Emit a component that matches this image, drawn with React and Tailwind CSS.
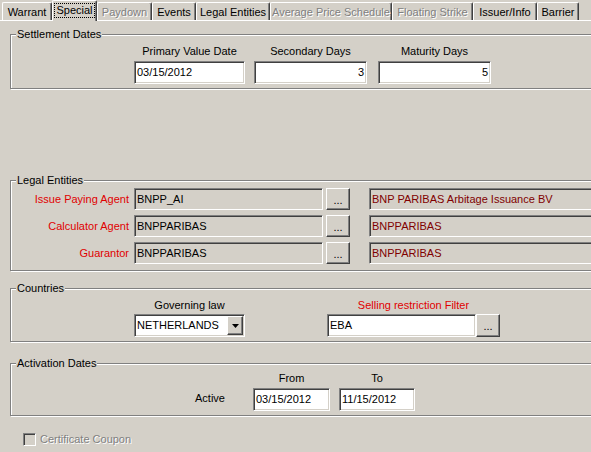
import React from "react";

const TABS = [
  { label: "Warrant", w: 50 },
  { label: "Special", w: 45, active: true },
  { label: "Paydown", w: 55, disabled: true },
  { label: "Events", w: 44 },
  { label: "Legal Entities", w: 74 },
  { label: "Average Price Schedule", w: 122, disabled: true },
  { label: "Floating Strike", w: 81, disabled: true },
  { label: "Issuer/Info", w: 64 },
  { label: "Barrier", w: 42 },
];

const sunken =
  "border border-t-[#808080] border-l-[#808080] border-b-white border-r-white shadow-[inset_1px_1px_0_#404040,inset_-1px_-1px_0_#d4d0c8]";
const raised =
  "border border-t-white border-l-white border-b-[#404040] border-r-[#404040] shadow-[inset_-1px_-1px_0_#808080]";
const disabledText = "text-[#808080] [text-shadow:1px_1px_0_#ffffff]";

function Tab({ label, w, active, disabled }) {
  return (
    <div
      style={{ width: w }}
      className={`flex items-center justify-center border-t border-l border-t-white border-l-white border-r border-r-[#404040] shadow-[inset_-1px_0_0_#808080] rounded-t-[2px] ${
        active ? "h-[21px] relative z-10 bg-[#d4d0c8]" : "h-[19px]"
      }`}
    >
      <span
        className={`leading-[13px] whitespace-nowrap ${disabled ? disabledText : "text-black"} ${
          active ? "border border-dotted border-black px-[1px] -mt-[2px]" : ""
        }`}
      >
        {label}
      </span>
    </div>
  );
}

function Group({ title, className, children }) {
  return (
    <div
      className={`relative ml-[10px] w-[600px] border border-[#808080] shadow-[inset_1px_1px_0_#ffffff,1px_1px_0_#ffffff] ${className}`}
    >
      <span className="absolute left-[5px] -top-[7px] px-[1px] bg-[#d4d0c8] leading-[13px] text-black">
        {title}
      </span>
      {children}
    </div>
  );
}

function Field({ value, right, gray, red, className }) {
  return (
    <div
      className={`${sunken} flex items-center px-[2px] overflow-hidden whitespace-nowrap ${
        gray ? "bg-[#d4d0c8]" : "bg-white"
      } ${right ? "justify-end" : ""} ${red ? "text-[#800000]" : "text-black"} ${className}`}
    >
      {value}
    </div>
  );
}

function DotsButton({ className }) {
  return (
    <div
      className={`${raised} bg-[#d4d0c8] flex items-center justify-center text-black leading-none pt-[2px] ${className}`}
    >
      ...
    </div>
  );
}

export default function App() {
  return (
    <div className="w-[591px] h-[452px] overflow-hidden bg-[#d4d0c8] font-['Liberation_Sans',Arial,sans-serif] text-[11px] text-black select-none">
      {/* tab strip */}
      <div className="relative flex items-end pl-[2px] h-[21px]">
        <div className="absolute left-0 right-0 bottom-0 h-px bg-white" />
        {TABS.map((t) => (
          <Tab key={t.label} {...t} />
        ))}
      </div>

      {/* Settlement Dates */}
      <Group title="Settlement Dates" className="mt-[13px] h-[55px]">
        <div className="flex pl-[123px] pt-[9px]">
          <div className="w-[111px] flex flex-col">
            <div className="text-center leading-[14px]">Primary Value Date</div>
            <Field value="03/15/2012" className="mt-[3px] h-[23px]" />
          </div>
          <div className="w-[113px] ml-[9px] flex flex-col">
            <div className="text-center leading-[14px]">Secondary Days</div>
            <Field value="3" right className="mt-[3px] h-[23px]" />
          </div>
          <div className="w-[113px] ml-[11px] flex flex-col">
            <div className="text-center leading-[14px]">Maturity Days</div>
            <Field value="5" right className="mt-[3px] h-[23px]" />
          </div>
        </div>
      </Group>

      {/* Legal Entities */}
      <Group title="Legal Entities" className="mt-[91px] h-[91px]">
        <div className="flex flex-col gap-[5px] pt-[7px]">
          {[
            ["Issue Paying Agent", "BNPP_AI", "BNP PARIBAS Arbitage Issuance BV"],
            ["Calculator Agent", "BNPPARIBAS", "BNPPARIBAS"],
            ["Guarantor", "BNPPARIBAS", "BNPPARIBAS"],
          ].map(([label, code, name]) => (
            <div key={label} className="flex items-center h-[22px]">
              <div className="w-[118px] text-right text-[#e00000] whitespace-nowrap">{label}</div>
              <Field value={code} gray className="ml-[5px] w-[189px] h-[22px]" />
              <DotsButton className="ml-[3px] w-[24px] h-[22px]" />
              <Field value={name} gray red className="ml-[19px] w-[240px] h-[22px]" />
            </div>
          ))}
        </div>
      </Group>

      {/* Countries */}
      <Group title="Countries" className="mt-[17px] h-[54px]">
        <div className="flex pl-[123px] pt-[9px]">
          <div className="w-[111px] flex flex-col">
            <div className="text-center leading-[14px]">Governing law</div>
            <div className={`${sunken} bg-white mt-[2px] h-[23px] flex items-center pl-[2px] pr-[1px]`}>
              <span className="flex-1">NETHERLANDS</span>
              <div className={`${raised} bg-[#d4d0c8] w-[16px] h-[19px] flex items-center justify-center`}>
                <svg width="7" height="4" viewBox="0 0 7 4">
                  <path d="M0 0h7L3.5 4z" fill="#000" />
                </svg>
              </div>
            </div>
          </div>
          <div className="ml-[82px] w-[173px] flex flex-col">
            <div className="text-center leading-[14px] text-[#e00000]">Selling restriction Filter</div>
            <div className="mt-[2px] flex">
              <Field value="EBA" className="w-[149px] h-[23px]" />
              <DotsButton className="w-[24px] h-[23px]" />
            </div>
          </div>
        </div>
      </Group>

      {/* Activation Dates */}
      <Group title="Activation Dates" className="mt-[21px] h-[53px]">
        <div className="flex items-end pt-[7px]">
          <div className="ml-[184px] w-[32px] pb-[5px]">Active</div>
          <div className="ml-[26px] w-[77px] flex flex-col">
            <div className="text-center leading-[14px]">From</div>
            <Field value="03/15/2012" className="mt-[3px] h-[23px]" />
          </div>
          <div className="ml-[9px] w-[76px] flex flex-col">
            <div className="text-center leading-[14px]">To</div>
            <Field value="11/15/2012" className="mt-[3px] h-[23px]" />
          </div>
        </div>
      </Group>

      {/* Certificate Coupon */}
      <div className="flex items-center mt-[15px] ml-[23px]">
        <div className={`${sunken} bg-[#d4d0c8] w-[13px] h-[13px]`} />
        <span className={`ml-[4px] ${disabledText}`}>Certificate Coupon</span>
      </div>
    </div>
  );
}
